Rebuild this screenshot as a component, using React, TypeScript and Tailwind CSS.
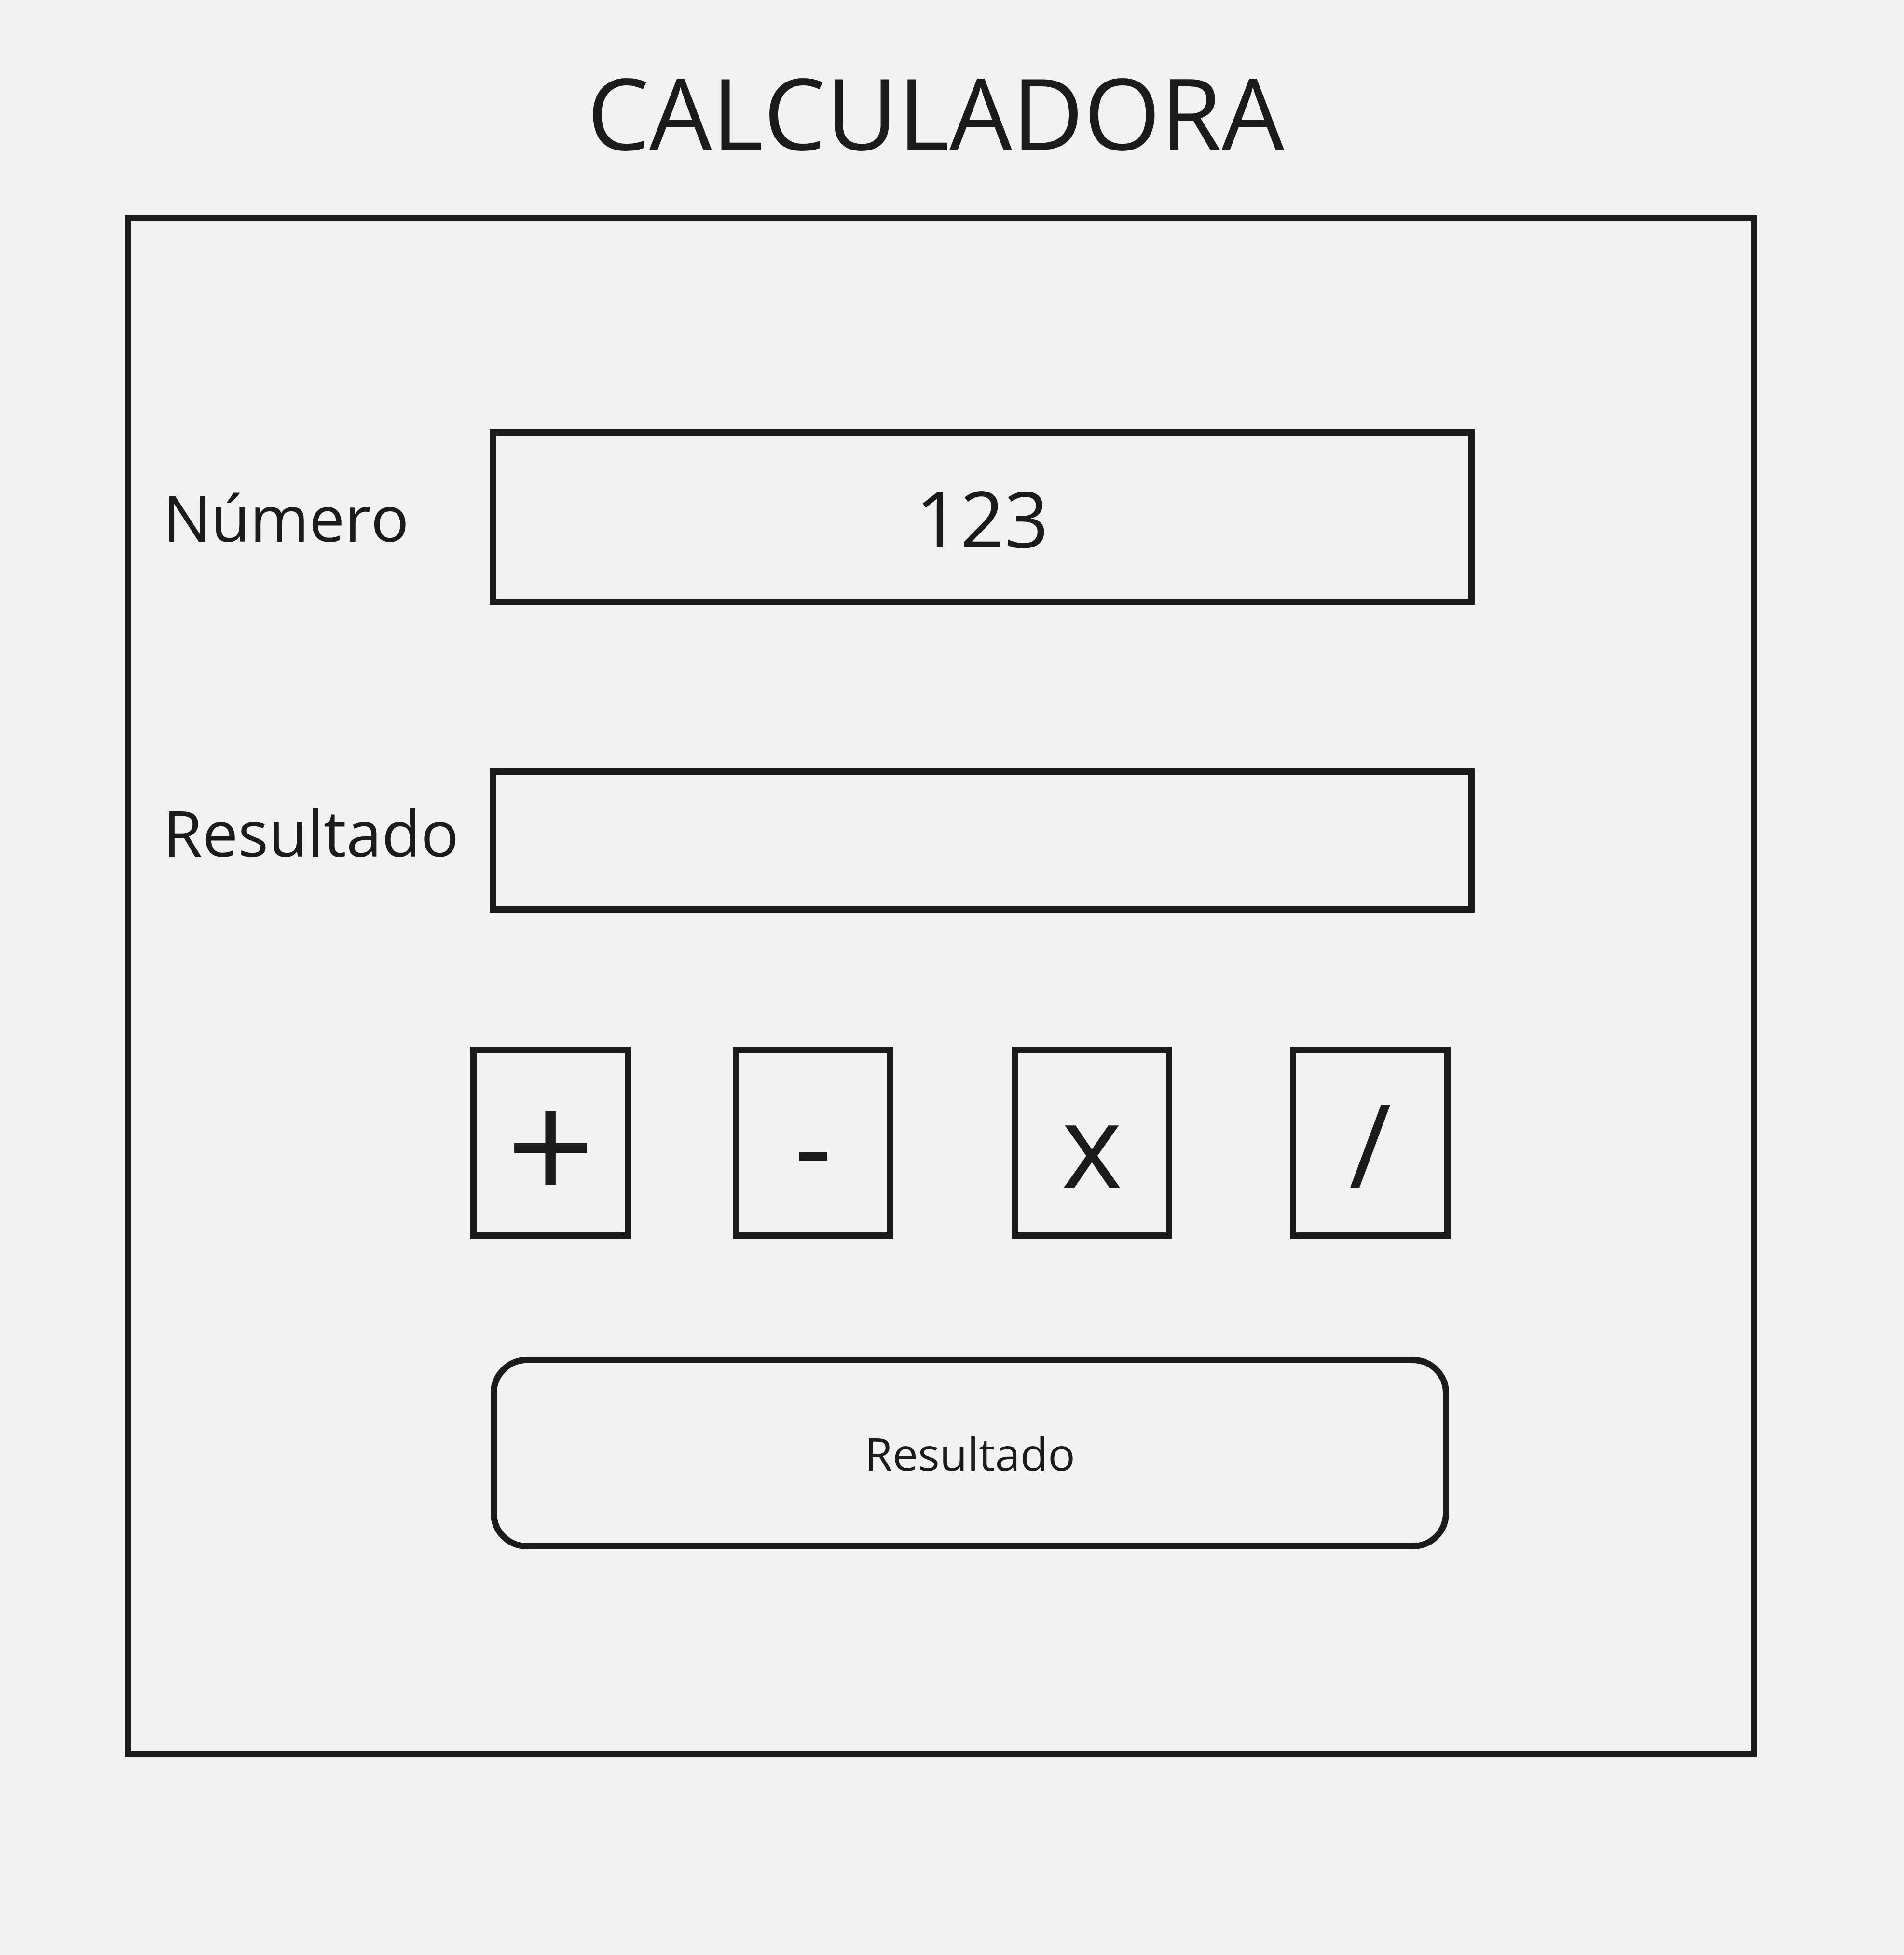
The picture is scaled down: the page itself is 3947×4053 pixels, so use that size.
import React from 'react';

const ops = [
  { label: '+', cls: 'text-[320px]', gap: '' },
  { label: '-', cls: 'text-[240px]', gap: 'ml-[211px]' },
  { label: 'x', cls: 'text-[240px]', gap: 'ml-[245px]' },
  { label: '/', cls: 'text-[240px]', gap: 'ml-[244px]' },
];

const Field = ({ label, value, height, labelClass = '' }: { label: string; value?: string; height: string; labelClass?: string }) => (
  <div className="flex items-center">
    <span className={`w-[677px] shrink-0 text-[132px] leading-none ${labelClass}`}>{label}</span>
    <div className={`w-[2042px] ${height} border-[13px] border-[#1b1b1b] flex items-center justify-center`}>
      {value && <span className="text-[161px] leading-none">{value}</span>}
    </div>
  </div>
);

export default function App() {
  return (
    <div className="min-h-[4053px] w-full bg-[#f2f2f2] text-[#1b1b1b] font-['Open_Sans',sans-serif]">
      <div className="ml-[259px] w-[3383px] pt-[129px] pr-[22px] text-center">
        <h1 className="text-[205px] leading-none font-normal">CALCULADORA</h1>
      </div>

      <div className="ml-[259px] mt-[112px] w-[3383px] h-[3197px] border-[13px] border-[#1b1b1b] pl-[66px] pt-[431px]">
        <Field label="Número" value="123" height="h-[364px]" />

        <div className="mt-[339px]">
          <Field label="Resultado" height="h-[299px]" labelClass="mb-[36px]" />
        </div>

        <div className="mt-[278px] ml-[637px] flex">
          {ops.map((op) => (
            <button
              key={op.label}
              type="button"
              className={`w-[333px] h-[398px] border-[13px] border-[#1b1b1b] flex items-center justify-center ${op.gap}`}
            >
              <span className={`${op.cls} leading-none`}>{op.label}</span>
            </button>
          ))}
        </div>

        <button
          type="button"
          className="mt-[245px] ml-[679px] w-[1987px] h-[399px] border-[13px] border-[#1b1b1b] rounded-[75px] flex items-center justify-center"
        >
          <span className="text-[94px] leading-none">Resultado</span>
        </button>
      </div>
    </div>
  );
}
